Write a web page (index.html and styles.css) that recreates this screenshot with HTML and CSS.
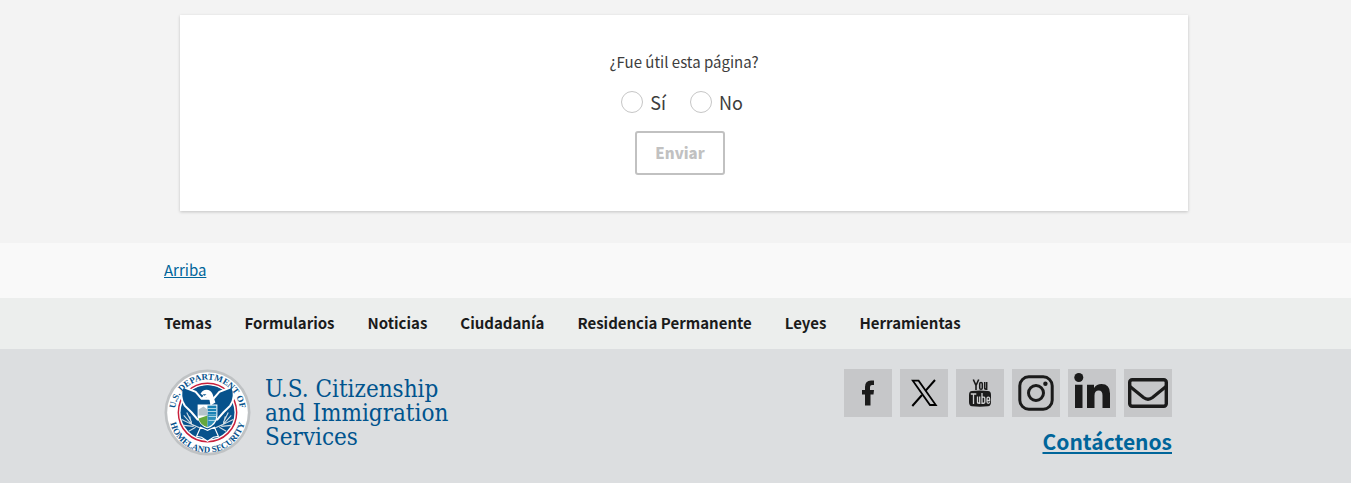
FILE: index.html
```html
<!DOCTYPE html>
<html lang="es">
<head>
<meta charset="utf-8">
<meta name="viewport" content="width=device-width, initial-scale=1">
<title>USCIS</title>
<link rel="stylesheet" href="styles.css">
</head>
<body>
<main class="feedback">
  <div class="container feedback-container">
    <form class="card">
      <fieldset class="question">
        <legend class="question-title">¿Fue útil esta página?</legend>
        <div class="options">
          <label class="option" for="yes"><input class="radio" type="radio" id="yes" name="useful">Sí</label>
          <label class="option" for="no"><input class="radio" type="radio" id="no" name="useful">No</label>
        </div>
      </fieldset>
      <button class="submit" type="submit" disabled>Enviar</button>
    </form>
  </div>
</main>
<footer>
  <div class="return">
    <div class="container"><a class="top-link" href="#">Arriba</a></div>
  </div>
  <nav class="footer-nav" aria-label="Pie de página">
    <ul class="container nav-list">
      <li><a class="nav-link" href="#">Temas</a></li>
      <li><a class="nav-link" href="#">Formularios</a></li>
      <li><a class="nav-link" href="#">Noticias</a></li>
      <li><a class="nav-link" href="#">Ciudadanía</a></li>
      <li><a class="nav-link" href="#">Residencia Permanente</a></li>
      <li><a class="nav-link" href="#">Leyes</a></li>
      <li><a class="nav-link" href="#">Herramientas</a></li>
    </ul>
  </nav>
  <div class="identity">
    <div class="container identity-row">
      <a class="brand" href="#">
        <svg class="seal" viewBox="0 0 88 88" aria-hidden="true">
          <defs>
            <path id="arc-top" d="M15.500 60.500A33 33 0 1 1 72.500 60.500"/>
            <path id="arc-bottom" d="M5.500 46A38.500 38.500 0 0 0 82.500 46"/>
          </defs>
          <circle cx="44" cy="44" r="43.500" fill="#bfc2c4"/>
          <circle cx="44" cy="44" r="40.800" fill="#fff"/>
          <circle cx="44" cy="44" r="29.500" fill="#fff" stroke="#c8203c" stroke-width="1.500"/>
          <circle cx="44" cy="44" r="27.300" fill="#07528c"/>
          <path d="M26 23q18-13 36 0l-8 8-20 0z" fill="#07528c"/>
          <path d="M19 18l13 5 6 7 12 0 6-7 13-5q4 10-2 19l-7 7-6 7H34l-6-7-7-7q-6-9-2-19z" fill="#07528c" stroke="#fff" stroke-width="2"/>
          <path d="M37 25q2-4 6-4t6 4l3 9-5 3-1-6-3-2-6 1 3-3z" fill="#fff"/>
          <path d="M39 25.500h4l-2 1.500z" fill="#07528c"/>
          <path d="M20 47l8 9 9 4M23 44l5 10M18 51l10 5M20 57l10 1M25 63l7-4M26 48l2 8M68 47l-8 9-9 4M65 44l-5 10M70 51l-10 5M68 57l-10 1M63 63l-7-4M62 48l-2 8" fill="none" stroke="#d3dde3" stroke-width="1.100"/>
          <path d="M37 59l7 3 7-3 4 9-5 1-6 4-6-4-5-1z" fill="#07528c" stroke="#fff" stroke-width="1.200"/>
          <path d="M34 36h20v12q-1 9-10 12-9-3-10-12z" fill="#fff"/>
          <path d="M44 37h9v9h-9z" fill="#1a82b5"/>
          <path d="M35 47v-6l5-3 4 3v6z" fill="#b5c4cb"/>
          <path d="M35 50l9-3v12q-8-3-9-9z" fill="#65a83d"/>
          <path d="M44 46h9q0 9-9 13z" fill="#2d8fba"/>
          <path d="M44 40h9M44 43h9M45 48h8M45 52h7" stroke="#d7edf5" stroke-width=".8"/>
          <text class="seal-text"><textPath href="#arc-top" startOffset="50%" text-anchor="middle">U.S. DEPARTMENT OF</textPath></text>
          <text class="seal-text"><textPath href="#arc-bottom" startOffset="50%" text-anchor="middle">HOMELAND SECURITY</textPath></text>
        </svg>
        <span class="brand-name">U.S. Citizenship<br>and Immigration<br>Services</span>
      </a>
      <div class="contact">
        <ul class="social">
          <li><a class="social-link" href="#" aria-label="Facebook"><svg class="icon" viewBox="0 0 48 48" aria-hidden="true"><path d="M21 36.500V25.500h-3V21h3v-3q0-6.500 6-6.500h3V16h-2q-2 0-2 2v3h4l-.5 4.500H26.500v11z"/></svg></a></li>
          <li><a class="social-link" href="#" aria-label="X"><svg class="icon" viewBox="0 0 48 48" aria-hidden="true"><path d="M12.800 11.700h5.800L35.800 36H30z" fill="none" stroke="#000" stroke-width="1.800"/><path d="M35 11L25.700 21.700M22 26L12.300 37" fill="none" stroke="#000" stroke-width="2"/></svg></a></li>
          <li><a class="social-link" href="#" aria-label="YouTube"><svg class="icon" viewBox="0 0 48 48" aria-hidden="true"><path d="M17.300 10.500l2.700 6v4.500M22.700 10.500l-2.700 6" fill="none" stroke="#1b1b1b" stroke-width="1.600"/><rect x="23.700" y="13.500" width="2.600" height="6.800" rx="1.300" fill="none" stroke="#1b1b1b" stroke-width="1.500"/><path d="M28.700 13v6.200q0 1.200 1 .9l1-.8V13v8" fill="none" stroke="#1b1b1b" stroke-width="1.500"/><path d="M16 22q8-.8 16 0 3 .2 3 4v7q0 4-3 4.300-8 .7-16 0-3-.3-3-4.300v-7q0-3.800 3-4z"/><path d="M14.800 25h5.500M17.500 25v10M21.500 27.500v5.800q0 1.200 1 .9l1.200-1v-5.700 7.500M26 24v11M26 28.500q2.800-1.200 2.800 1v3.500q0 2-2.800.8M31 31.500h2.600v-1.700q0-1.600-1.300-1.600T31 29.800v3q0 1.500 1.300 1.500t1.300-1.500" fill="none" stroke="#d0d1d2" stroke-width="1.300"/></svg></a></li>
          <li><a class="social-link" href="#" aria-label="Instagram"><svg class="icon" viewBox="0 0 48 48" aria-hidden="true"><rect x="7.800" y="7.800" width="32.400" height="32.400" rx="9" fill="none" stroke="#1b1b1b" stroke-width="3"/><circle cx="24" cy="24" r="7.500" fill="none" stroke="#1b1b1b" stroke-width="3"/><circle cx="33.400" cy="14.800" r="2.200"/></svg></a></li>
          <li><a class="social-link" href="#" aria-label="LinkedIn"><svg class="icon" viewBox="0 0 48 48" aria-hidden="true"><circle cx="10.800" cy="8.500" r="4.500"/><path d="M7 15.700h7.500V39H7zM19 15.700h7V19q2.500-4 7.500-4 8.500 0 8.500 9.500V39h-7.500V26.500q0-5-3.800-5-4.200 0-4.200 5V39H19z"/></svg></a></li>
          <li><a class="social-link" href="#" aria-label="Correo electrónico"><svg class="icon" viewBox="0 0 48 48" aria-hidden="true"><rect x="5.700" y="10.700" width="36.600" height="26.600" rx="2.500" fill="none" stroke="#1b1b1b" stroke-width="3.400"/><path d="M6 17.500L19.500 28.500q4.500 3.500 9 0L42 17.500" fill="none" stroke="#1b1b1b" stroke-width="3.200"/></svg></a></li>
        </ul>
        <a class="contact-link" href="#">Contáctenos</a>
      </div>
    </div>
  </div>
</footer>
</body>
</html>
```
FILE: styles.css
```css
* { box-sizing: border-box; }

body {
  margin: 0;
  background: #dcdee0;
  color: #3d3d3d;
  font-family: "Noto Sans CJK SC", "Open Sans", sans-serif;
  font-size: 15px;
  line-height: 24px;
}

ul { margin: 0; padding: 0; list-style: none; }

.feedback, .return, .footer-nav, .identity { padding-right: 15px; }

.container {
  max-width: 1040px;
  margin: 0 auto;
  padding: 0 16px;
}

.feedback {
  background: #f3f3f3;
  padding-top: 15px;
  padding-bottom: 32px;
}

.feedback-container { padding: 0 0 0 32px; }

.card {
  display: flex;
  flex-direction: column;
  align-items: center;
  padding: 35px 16px 36px;
  background: #fff;
  box-shadow: 0 1px 3px rgba(0, 0, 0, .2);
}

.question {
  min-width: 0;
  margin: 0;
  padding: 0;
  border: 0;
}

.question-title { padding: 0; }

.options {
  display: flex;
  justify-content: center;
  gap: 24px;
  padding: 13px 4px 14px 0;
}

.option {
  display: flex;
  align-items: center;
  gap: 7px;
  font-size: 18px;
  line-height: 30px;
}

.radio {
  appearance: none;
  width: 22px;
  height: 22px;
  margin: 0;
  border: 1px solid #c6c6c6;
  border-radius: 50%;
  background: #fff;
}

.submit {
  margin-right: 8px;
  padding: 8px 18px;
  border: 2px solid #c1c1c1;
  border-radius: 3px;
  background: #fff;
  color: #c1c1c1;
  font: 900 15px/24px "Noto Sans CJK SC", "Open Sans", sans-serif;
}

.return {
  background: #f9f9f9;
  padding-top: 15px;
  padding-bottom: 16px;
}

.top-link { color: #00659a; }

.footer-nav {
  background: #eceeed;
  padding-top: 13px;
  padding-bottom: 14px;
}

.nav-list {
  display: flex;
  flex-wrap: wrap;
  gap: 0 33px;
}

.nav-link {
  color: #1b1b1b;
  font-weight: bold;
  text-decoration: none;
}

.identity {
  background: #dcdee0;
  padding-top: 20px;
  padding-bottom: 26px;
}

.identity-row {
  display: flex;
  flex-wrap: wrap;
  align-items: flex-start;
  justify-content: space-between;
}

.brand {
  display: flex;
  align-items: center;
  gap: 14px;
  color: #00548e;
  text-decoration: none;
}

.seal { display: block; width: 87px; height: 87px; }

.seal-text {
  fill: #07528c;
  font: bold 9px "Liberation Serif", serif;
}

.brand-name {
  font: 24px/24px "DejaVu Serif Condensed", "DejaVu Serif", serif;
}

.contact {
  display: flex;
  flex-direction: column;
  align-items: flex-end;
  gap: 8px;
}

.social { display: flex; gap: 8px; }

.social-link {
  display: block;
  background: #c6c7c9;
}

.icon {
  display: block;
  width: 48px;
  height: 48px;
  fill: #1b1b1b;
}

.contact-link {
  color: #00659a;
  font-size: 21px;
  line-height: 32px;
  font-weight: bold;
}
```
